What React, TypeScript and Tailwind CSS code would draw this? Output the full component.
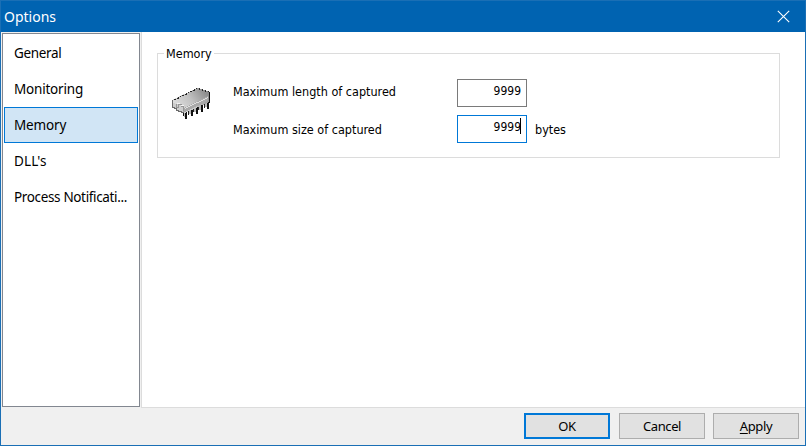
import React from "react";

const pages = [
  { name: "General", tracking: "tracking-[-0.35px]" },
  { name: "Monitoring", tracking: "tracking-[-0.2px]" },
  { name: "Memory", tracking: "tracking-[-0.15px]" },
  { name: "DLL's", tracking: "tracking-[0.1px]" },
  { name: "Process Notificati...", tracking: "tracking-[-0.35px]" },
];

function ChipIcon() {
  return (
    <svg width="40" height="34" viewBox="0 0 40 34" shapeRendering="crispEdges" className="-ml-px block">
      <defs>
        <linearGradient id="chipTop" x1="0" y1="0.7" x2="1" y2="0.2">
          <stop offset="0" stopColor="#e2e2e2" />
          <stop offset="0.5" stopColor="#c2c2c2" />
          <stop offset="1" stopColor="#878787" />
        </linearGradient>
      </defs>
      <path d="M36 5h3v11h-3z" fill="#151515" />
      <path d="M12 24h1v5h-1zM14 25h2v7h-2zM20 22h2v7h-2zM25 20h2v7h-2zM30 17h2v8h-2zM36 14h2v8h-2z" fill="#111" />
      <path d="M13 25h1v5h-1zM18 22h2v5h-2zM23 20h2v5h-2zM28 18h2v5h-2zM34 15h2v5h-2z" fill="#bcbcbc" />
      <path d="M17 23h1v5h-1zM22 20h1v5h-1zM27 18h1v5h-1zM33 16h1v5h-1z" fill="#222" />
      <path d="M1 13L26 1L38 5V15L14 26H12L1 20Z" fill="url(#chipTop)" />
      <path d="M1 15L8 18L12 20V26L8 24L1 20Z" fill="#cdcdcd" />
      <path d="M13 21L37 9V14L14 25H12Z" fill="#a9a9a9" />
      <path d="M14 21L37 10V11L14 22Z" fill="#dedede" />
      <path
        d="M3 12h2v-1h2v-1h2v-1h2v-1h2v-1h2v-1h2v-1h2v-1h2v-1h2v-1h2v-1h3v1h3v1h3v1h3v1"
        fill="none"
        stroke="#252525"
        strokeWidth="1"
        strokeDasharray="2 2"
      />
      <path d="M1 13v7h2v1h2v2h2v1h3v1h3" fill="none" stroke="#6b6b6b" strokeWidth="1" />
      <path d="M5 17v3h2v-3h3v2h2v5" fill="none" stroke="#969696" strokeWidth="1" />
      <path d="M6 16h3v1h-3zM10 18h3v1h-3z" fill="#f4f4f4" />
    </svg>
  );
}

function DialogButton({ children, primary = false }: { children: React.ReactNode; primary?: boolean }) {
  return (
    <button
      className={`flex h-[26px] w-[86px] items-center justify-center bg-[#e1e1e1] text-[13px] leading-[16px] tracking-[-0.4px] font-['Noto_Sans',sans-serif] ${
        primary ? "border-2 border-[#0078d7]" : "border border-[#adadad]"
      }`}
    >
      <span>{children}</span>
    </button>
  );
}

export default function App() {
  return (
    <div className="flex h-[446px] w-[806px] flex-col overflow-hidden border border-[#1a6fb5] bg-[#f0f0f0] text-black">
      <header className="flex h-[31px] shrink-0 items-center justify-between bg-[#0063b1] pr-[15px] pl-[3px] font-['Noto_Sans',sans-serif] text-[14px] text-white">
        <span>Options</span>
        <svg width="13" height="13" viewBox="0 0 13 13">
          <path d="M.8 .8L12.2 12.2M12.2 .8L.8 12.2" stroke="white" strokeWidth="1.1" />
        </svg>
      </header>
      <div className="flex h-[376px] shrink-0">
        <nav className="mt-px ml-px h-[374px] w-[138px] shrink-0 border border-[#828790] bg-white p-px font-['Noto_Sans',sans-serif] text-[13.5px]">
          {pages.map(({ name, tracking }) => (
            <div
              key={name}
              className={`flex h-9 w-[134px] items-center border pl-[9px] whitespace-nowrap ${tracking} ${
                name === "Memory" ? "border-[#0078d7] bg-[#d1e5f5]" : "border-transparent"
              }`}
            >
              {name}
            </div>
          ))}
        </nav>
        <main className="ml-px grow border-b border-l border-[#dcdcdc] bg-white pt-[13px] pl-[15px] font-['DejaVu_Sans_Condensed','DejaVu_Sans',sans-serif] text-[12.5px]">
          <fieldset className="h-[113px] w-[623px] border border-[#dcdcdc] pl-[14px]">
            <legend className="-ml-[8px] h-4 px-[2px] leading-[18px]">Memory</legend>
            <div className="flex">
              <div className="mt-[26px] w-[61px]">
                <ChipIcon />
              </div>
              <div className="flex flex-col gap-2 pt-[18px]">
                <div className="flex h-7">
                  <span className="w-[224px] pt-1 leading-[18px]">Maximum length of captured</span>
                  <div className="h-7 w-[70px] border border-[#7a7a7a] pt-[3px] pr-[5px] text-right text-[12px] leading-[17px]">9999</div>
                </div>
                <div className="flex h-7">
                  <span className="w-[224px] pt-[6px] leading-[18px]">Maximum size of captured</span>
                  <div className="flex h-7 w-[70px] justify-end border border-[#0078d7] pt-[3px] pr-[5px] text-[12px] leading-[17px]">
                    <span>9999</span>
                    <span className="-mt-px -ml-px h-4 w-px bg-black" />
                  </div>
                  <span className="pt-[6px] pl-2 leading-[18px]">bytes</span>
                </div>
              </div>
            </div>
          </fieldset>
        </main>
      </div>
      <footer className="flex grow pt-[5px] pl-[523px]">
        <DialogButton primary>OK</DialogButton>
        <div className="ml-[9px]">
          <DialogButton>Cancel</DialogButton>
        </div>
        <div className="ml-2">
          <DialogButton>
            <span className="underline underline-offset-2">A</span>pply
          </DialogButton>
        </div>
      </footer>
    </div>
  );
}
